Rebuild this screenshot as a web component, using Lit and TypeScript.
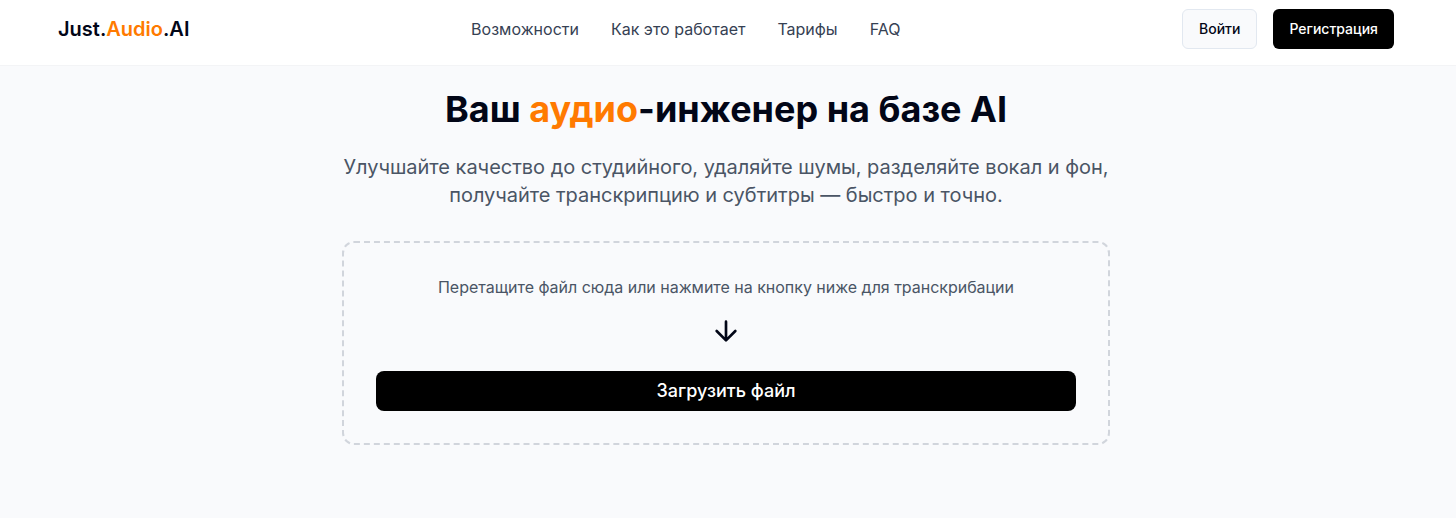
import { LitElement, html, css } from "lit";
import { customElement } from "lit/decorators.js";

@customElement("app-root")
class AppRoot extends LitElement {
  static styles = css`
    :host { display: block; height: 518px; overflow: hidden; background: #f9fafc; color: #020617; font-family: Inter, sans-serif; line-height: 1.5; }
    * { box-sizing: border-box; }
    header { height: 66px; padding: 9px 62px 0 58px; display: flex; justify-content: space-between; align-items: flex-start; background: #fff; border-bottom: 1px solid #f3f4f6; }
    .logo { font-size: 20px; line-height: 40px; font-weight: 600; }
    .accent { color: #ff7a00; }
    nav { display: flex; gap: 32px; line-height: 40px; font-size: 16px; color: #364153; }
    .actions { display: flex; gap: 16px; }
    button { font: 500 14px/20px Inter, sans-serif; height: 40px; padding: 0 16px; border-radius: 6px; border: 0; background: #000; color: #fff; }
    .light { background: #f9fafc; border: 1px solid #e2e8f0; color: #020617; }
    main { display: flex; flex-direction: column; align-items: center; padding: 23px 4px 0 0; text-align: center; }
    h1 { margin: 0; font-size: 36px; line-height: 40px; font-weight: 700; }
    .lead { margin: 24px 0 32px; font-size: 20px; line-height: 28px; color: #4a5565; white-space: nowrap; letter-spacing: -0.02px; }
    .drop { width: 768px; height: 204px; padding: 32px; display: flex; flex-direction: column; align-items: center; border: 2px dashed #d1d5dc; border-radius: 12px; }
    .hint { font-size: 16px; line-height: 24px; color: #4a5565; letter-spacing: -0.02px; }
    svg { margin: 16px 0 24px; width: 32px; height: 32px; }
    .upload { width: 100%; font-size: 18px; border-radius: 8px; }
  `;
  render() {
    return html`
      <header>
        <div class="logo">Just.<span class="accent">Audio</span>.AI</div>
        <nav><span>Возможности</span><span>Как это работает</span><span>Тарифы</span><span>FAQ</span></nav>
        <div class="actions"><button class="light">Войти</button><button>Регистрация</button></div>
      </header>
      <main>
        <h1>Ваш <span class="accent">аудио</span>-инженер на базе AI</h1>
        <div class="lead">Улучшайте качество до студийного, удаляйте шумы, разделяйте вокал и фон,<br>получайте транскрипцию и субтитры — быстро и точно.</div>
        <div class="drop">
          <div class="hint">Перетащите файл сюда или нажмите на кнопку ниже для транскрибации</div>
          <svg viewBox="0 0 24 24" fill="none" stroke="currentColor" stroke-width="2" stroke-linecap="round" stroke-linejoin="round"><path d="M12 5v14M19 12l-7 7-7-7"/></svg>
          <button class="upload">Загрузить файл</button>
        </div>
      </main>`;
  }
}
